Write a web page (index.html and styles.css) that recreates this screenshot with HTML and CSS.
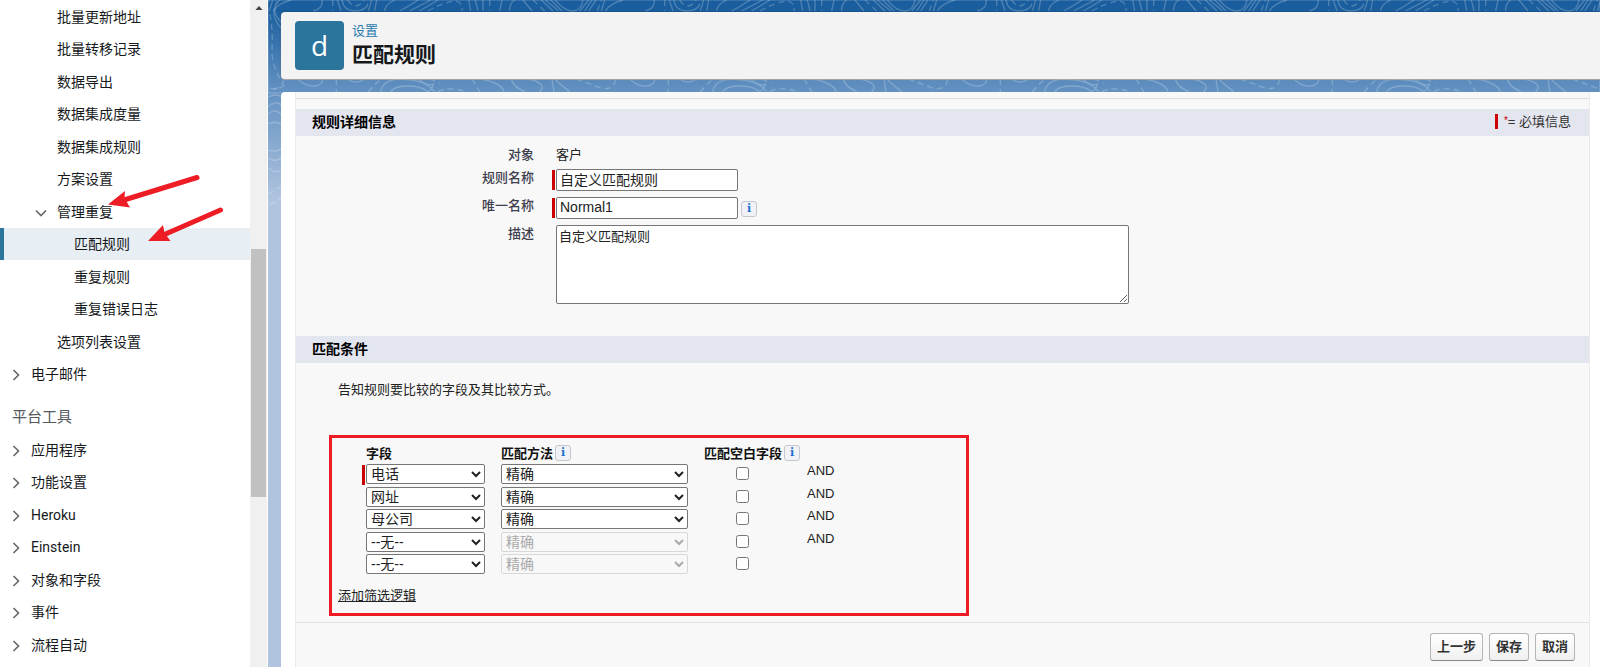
FILE: index.html
```html
<!DOCTYPE html>
<html lang="zh-CN">
<head>
<meta charset="utf-8">
<title>匹配规则</title>
<link rel="stylesheet" href="styles.css">
</head>
<body>
<div class="app">
  <nav class="sidebar" aria-label="设置">
    <ul class="tree">
      <li class="leaf"><a href="#">批量更新地址</a></li>
      <li class="leaf"><a href="#">批量转移记录</a></li>
      <li class="leaf"><a href="#">数据导出</a></li>
      <li class="leaf"><a href="#">数据集成度量</a></li>
      <li class="leaf"><a href="#">数据集成规则</a></li>
      <li class="leaf"><a href="#">方案设置</a></li>
      <li class="branch"><svg class="chevron" viewBox="0 0 12 12"><path d="M1 4.500 6 9.500l5-5"/></svg><a href="#">管理重复</a></li>
      <li class="sub selected"><a href="#" aria-current="page">匹配规则</a></li>
      <li class="sub"><a href="#">重复规则</a></li>
      <li class="sub"><a href="#">重复错误日志</a></li>
      <li class="leaf"><a href="#">选项列表设置</a></li>
      <li class="root"><svg class="chevron" viewBox="0 0 12 12"><path d="M3.500 2 8.500 7l-5 5"/></svg><a href="#">电子邮件</a></li>
    </ul>
    <h2 class="group">平台工具</h2>
    <ul class="tree">
      <li class="root"><svg class="chevron" viewBox="0 0 12 12"><path d="M3.500 2 8.500 7l-5 5"/></svg><a href="#">应用程序</a></li>
      <li class="root"><svg class="chevron" viewBox="0 0 12 12"><path d="M3.500 2 8.500 7l-5 5"/></svg><a href="#">功能设置</a></li>
      <li class="root"><svg class="chevron" viewBox="0 0 12 12"><path d="M3.500 2 8.500 7l-5 5"/></svg><a href="#">Heroku</a></li>
      <li class="root"><svg class="chevron" viewBox="0 0 12 12"><path d="M3.500 2 8.500 7l-5 5"/></svg><a href="#">Einstein</a></li>
      <li class="root"><svg class="chevron" viewBox="0 0 12 12"><path d="M3.500 2 8.500 7l-5 5"/></svg><a href="#">对象和字段</a></li>
      <li class="root"><svg class="chevron" viewBox="0 0 12 12"><path d="M3.500 2 8.500 7l-5 5"/></svg><a href="#">事件</a></li>
      <li class="root"><svg class="chevron" viewBox="0 0 12 12"><path d="M3.500 2 8.500 7l-5 5"/></svg><a href="#">流程自动</a></li>
    </ul>
    <svg class="arrows" viewBox="0 0 250 300" aria-hidden="true">
      <path class="shaft" d="M197 177.500 124 200M220.500 210 161 236"/>
      <path d="M108 204.500 125 191 124.500 198 130 207.500zM148 241 163 225 164.500 233 170.500 241z"/>
    </svg>
  </nav>
  <div class="scroll" aria-hidden="true">
    <svg class="scroll-up" viewBox="0 0 9 5"><path d="M0 5 4.500 0 9 5z"/></svg>
    <div class="thumb"></div>
  </div>
  <main class="workspace">
    <svg class="topo" aria-hidden="true">
      <defs>
        <pattern id="contours" x="100" width="332" height="220" patternUnits="userSpaceOnUse" viewBox="0 0 996 660">
          <path d="M0 33Q8 16 10 0M20 33 26 0M50 33Q50 14 80 0M95 33Q120 20 150 0M125 33 188 0M155 33 210 0M302 0 308 33M322 0 330 33M345 0V33M395 33 402 0M425 33Q424 10 440 0M465 0 492 33M520 0 555 33M532 0 572 33M548 0 582 33M562 0Q590 34 615 33T645 0M635 33 662 0M650 33 672 0M662 33 684 0M700 33 710 0M712 33Q725 10 765 0M832 33Q862 25 858 0M904 0 915 33M918 0Q922 33 958 33T1000 0"/>
          <path class="dash" d="M180 33Q215 12 250 5T282 33M365 0V33M495 0 530 33M688 33 700 0M890 0V33M935 0Q958 36 985 0"/>
          <path d="M38 275Q45 240 90 238 170 236 200 275M68 275Q80 258 120 258T178 275M150 237Q180 260 196 253 190 275 175 275M340 237Q402 250 408 275M430 237Q435 260 470 275M480 237Q540 250 515 275M552 237 558 275M560 237Q585 260 605 275M785 237Q810 260 835 258T860 237M935 237Q960 256 985 237"/>
          <path class="dash" d="M0 275 38 237M185 237 215 250M210 275Q240 258 295 275M312 237 335 275M625 237 700 265Q740 270 742 240M901 237V275"/>
        </pattern>
      </defs>
      <rect width="100%" height="93" fill="url(#contours)"/>
      <path d="M12 0Q-1 12 13 28M9 1Q3 12 13 22M0 97Q8 93 14 97M0 107Q8 99 14 106M0 114Q8 107 14 116M0 124Q8 120 14 125M0 150Q9 153 14 148M0 158Q8 163 14 157M0 168Q8 174 14 170"/>
      <path class="dash" d="M2 14Q5 32 4 48T14 82M2 88Q10 92 17 84M0 194 14 186M2 205 14 197"/>
    </svg>
    <header class="page-head">
      <div class="logo" aria-hidden="true">d</div>
      <div>
        <a class="crumb" href="#">设置</a>
        <h1>匹配规则</h1>
      </div>
    </header>
    <div class="panel">
      <form class="sheet">
        <section>
          <div class="band"><h3>规则详细信息</h3><p class="required"><span class="bar"></span><sup>*</sup>= 必填信息</p></div>
          <div class="details">
            <span class="label">对象</span><span class="field">客户</span>
            <label for="name">规则名称</label><div class="field must"><input id="name" type="text" value="自定义匹配规则"></div>
            <label for="uname">唯一名称</label><div class="field must"><input id="uname" type="text" value="Normal1"><button type="button" class="info" aria-label="帮助">i</button></div>
            <label for="desc">描述</label><div class="field"><textarea id="desc">自定义匹配规则</textarea></div>
          </div>
        </section>
        <section>
          <div class="band"><h3>匹配条件</h3></div>
          <p class="hint">告知规则要比较的字段及其比较方式。</p>
          <div class="criteria">
            <table>
              <thead>
                <tr><th class="c-field">字段</th><th class="c-method">匹配方法<button type="button" class="info" aria-label="帮助">i</button></th><th class="c-blank">匹配空白字段<button type="button" class="info" aria-label="帮助">i</button></th><th class="c-op"></th></tr>
              </thead>
              <tbody>
                <tr><td class="must"><select aria-label="字段 1"><option>电话</option></select></td><td><select aria-label="匹配方法 1"><option>精确</option></select></td><td class="check"><input type="checkbox" aria-label="匹配空白字段 1"></td><td class="op">AND</td></tr>
                <tr><td><select aria-label="字段 2"><option>网址</option></select></td><td><select aria-label="匹配方法 2"><option>精确</option></select></td><td class="check"><input type="checkbox" aria-label="匹配空白字段 2"></td><td class="op">AND</td></tr>
                <tr><td><select aria-label="字段 3"><option>母公司</option></select></td><td><select aria-label="匹配方法 3"><option>精确</option></select></td><td class="check"><input type="checkbox" aria-label="匹配空白字段 3"></td><td class="op">AND</td></tr>
                <tr><td><select aria-label="字段 4"><option>--无--</option></select></td><td><select aria-label="匹配方法 4" disabled><option>精确</option></select></td><td class="check"><input type="checkbox" aria-label="匹配空白字段 4"></td><td class="op">AND</td></tr>
                <tr><td><select aria-label="字段 5"><option>--无--</option></select></td><td><select aria-label="匹配方法 5" disabled><option>精确</option></select></td><td class="check"><input type="checkbox" aria-label="匹配空白字段 5"></td><td class="op"></td></tr>
              </tbody>
            </table>
            <a class="logic" href="#">添加筛选逻辑</a>
          </div>
        </section>
        <footer class="actions">
          <button type="button">上一步</button>
          <button type="button">保存</button>
          <button type="button">取消</button>
        </footer>
      </form>
    </div>
  </main>
</div>
</body>
</html>
```
FILE: styles.css
```css
* { box-sizing: border-box; }
body {
  margin: 0;
  background: #fff;
  color: #222;
  font: 13px/20px "Liberation Sans", "Noto Sans CJK SC", sans-serif;
}
h1, h2, h3, p, ul { margin: 0; padding: 0; }
a { text-decoration: none; color: inherit; }

.app { display: flex; height: 100vh; overflow: hidden; }

/* Sidebar */
.sidebar {
  position: relative;
  flex: 0 0 250px;
  overflow: hidden;
  font: 14px/20px Roboto, "Noto Sans CJK SC", sans-serif;
  color: #16191c;
}
.tree { list-style: none; }
.tree li { display: flex; align-items: center; height: 33px; }
.tree li:nth-child(even) { height: 32px; }
.tree .leaf { padding-left: 57px; }
.tree .branch { padding-left: 35px; gap: 10px; }
.tree .sub { padding-left: 74px; }
.tree .root { padding-left: 10px; gap: 9px; }
.tree .selected { background: #e8eff4; border-left: 4px solid #2b749c; padding-left: 70px; }
.chevron { width: 12px; height: 12px; fill: none; stroke: #666; stroke-width: 1.6; overflow: visible; }
.group { margin-left: 12px; height: 43px; font-size: 15px; line-height: 54px; font-weight: 400; color: #54585d; }
.arrows { position: absolute; left: 0; top: 0; width: 250px; height: 300px; fill: #ee1c25; pointer-events: none; }
.arrows .shaft { fill: none; stroke: #ee1c25; stroke-width: 5; stroke-linecap: round; }

.scroll { flex: 0 0 17px; background: #f0f0f0; display: flex; flex-direction: column; align-items: center; }
.scroll-up { width: 8px; height: 4px; margin: 6px 0 239px; fill: #444; flex: none; }
.thumb { width: 15px; height: 248px; background: #c1c1c1; }

/* Workspace */
.workspace {
  position: relative;
  flex: 1;
  display: flex;
  flex-direction: column;
  gap: 13px;
  padding: 12px 0 0 13px;
  border-left: 1px solid #fff;
  background: linear-gradient(#195d9e 0, #1b5f9f 12px, #5a8bbd 80px, #6391c2 92px, #b0c4df 200px);
}
.topo { position: absolute; left: 0; top: 0; width: 100%; height: 220px; fill: none; stroke: rgba(255, 255, 255, .22); stroke-width: 1.300; }
.topo pattern path { stroke-width: 4; }
.topo .dash { stroke-dasharray: 6 4; }
.topo pattern .dash { stroke-dasharray: 18 12; }

.page-head {
  position: relative;
  display: flex;
  gap: 8px;
  height: 67px;
  padding: 9px 14px;
  background: #f3f3f3;
  border-radius: 4px 0 0 4px;
  box-shadow: 0 1px 1px #a9a9a9, 0 0 2px rgba(0, 0, 0, .4);
}
.logo { width: 49px; height: 49px; border-radius: 4px; background: #2b749c; color: #fff; font: 28px/48px "Open Sans", sans-serif; text-align: center; }
.crumb { display: block; height: 20px; line-height: 20px; color: #2a7aad; }
h1 { font-size: 21px; line-height: 28px; color: #16191c; }

.panel { position: relative; flex: 1; padding: 0 10px 0 14px; background: #fff; border-radius: 4px 0 0 0; }
.sheet { height: 100%; background: #f8f8f8; border: solid #eaeaea; border-width: 0 1px; padding-top: 6px; }
.sheet::before { content: ""; display: block; height: 10px; border-top: 1px solid #dcdcdc; }
.band { display: flex; justify-content: space-between; height: 27px; padding: 0 18px 0 16px; background: #e3e5ef; }
.band h3 { font-size: 14px; line-height: 27px; color: #000; }
.required { display: flex; align-items: center; height: 25px; color: #333; }
.required .bar { width: 3px; height: 15px; margin-right: 6px; background: #c00; }
.required sup { color: #c00; font-size: 10px; line-height: 10px; align-self: flex-start; margin-top: 7px; }

.details {
  display: grid;
  grid-template-columns: 238px 1fr;
  grid-template-rows: 21px 28px 28px auto;
  column-gap: 22px;
  height: 200px;
  padding-top: 12px;
}
.details label, .label { text-align: right; line-height: 18px; color: #3e3e4e; font-weight: 500; }
.label { line-height: 14px; }
.field { display: flex; align-items: flex-start; line-height: 14px; }
.field input { width: 182px; height: 22px; padding: 0 3px 2px; border: 1px solid #767676; border-radius: 2px; background: #fff; font: 14px "Liberation Sans", "Noto Sans CJK SC", sans-serif; color: #222; }
.must { position: relative; }
.must::before { content: ""; position: absolute; left: -4px; top: 1px; width: 3px; height: 20px; background: #c00; }
textarea { width: 573px; height: 79px; padding: 2px; border: 1px solid #767676; border-radius: 2px; font: 13px/18px "Liberation Sans", "Noto Sans CJK SC", sans-serif; color: #222; }
.info {
  width: 16px; height: 16px; padding: 0;
  border: 1px solid #c4c8cc; border-radius: 3px;
  background: #f0f2f5; color: #1b72d0;
  font: bold 11px/14px "DejaVu Serif", serif; text-align: center; vertical-align: middle;
}
.field .info { margin: 4px 0 0 3px; }

.hint { height: 72px; padding: 17px 42px 0; color: #222; }
.criteria { width: 640px; height: 181px; margin-left: 33px; padding: 6px 6px 0; border: 3px solid #ee1c25; }
table { table-layout: fixed; width: 590px; margin-left: 28px; border-collapse: collapse; color: #222; }
th { height: 20px; padding: 0; text-align: left; font-size: 13px; line-height: 20px; color: #111; }
th .info { margin-left: 2px; margin-top: -3px; }
.c-field { width: 135px; }
.c-method { width: 203px; }
.c-blank { width: 103px; }
td { height: 23px; padding: 0; vertical-align: top; line-height: 14px; }
tbody tr:nth-child(even) td { height: 22px; }
td select { display: block; width: 119px; height: 20px; border: 1px solid #767676; border-radius: 2px; background-color: #fff; color: #222; font: 14px "Liberation Sans", "Noto Sans CJK SC", sans-serif; }
td + td select { width: 187px; }
td select:disabled { background-color: #f8f8f8; border-color: #d8d8d8; color: #aaa; opacity: 1; }
.check input { display: block; width: 13px; height: 13px; margin: 3px 0 0; }
td.check { padding-left: 32px; }
.logic { display: inline-block; margin-top: 9px; text-decoration: underline; color: #222; }

.actions { display: flex; justify-content: flex-end; gap: 6px; margin-top: 6px; padding: 10px 14px; border-top: 1px solid #e0e0e0; }
.actions button { height: 28px; padding: 0 6px; border: 1px solid #b5b5b5; border-bottom-color: #888; border-radius: 3px; background: linear-gradient(#fff, #f0f0f0); color: #333; font: bold 13px/24px "Liberation Sans", "Noto Sans CJK SC", sans-serif; }
```
